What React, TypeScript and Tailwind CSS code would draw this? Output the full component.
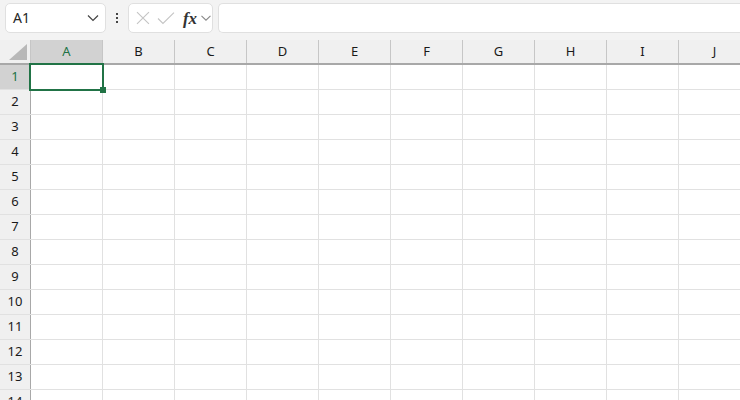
import React from "react";

const cols = ["A", "B", "C", "D", "E", "F", "G", "H", "I", "J"];
const rows = Array.from({ length: 14 }, (_, i) => i + 1);

function Chevron({ className }: { className?: string }) {
  return (
    <svg width="12" height="8" viewBox="0 0 12 8" className={className} fill="none">
      <path d="M1 1.5 L6 6.5 L11 1.5" stroke="currentColor" strokeWidth="1.2" />
    </svg>
  );
}

export default function App() {
  return (
    <div
      className="w-[740px] h-[400px] overflow-hidden bg-white"
      style={{ fontFamily: '"Segoe UI", "Noto Sans", Roboto, sans-serif' }}
    >
      {/* Formula bar */}
      <div className="h-[40px] bg-[#f3f3f3] flex items-start pt-[3px] pl-[5px]">
        <div className="w-[101px] h-[30px] bg-white border border-[#e0e0e0] rounded-[5px] flex items-center pl-[7px] pr-[6px] shrink-0">
          <span className="text-[14px] text-[#262626] flex-1 leading-none">A1</span>
          <Chevron className="text-[#444]" />
        </div>
        <div className="w-[22px] h-[30px] flex flex-col items-center justify-center gap-[2px] shrink-0">
          <div className="w-[2px] h-[2px] bg-[#444]" />
          <div className="w-[2px] h-[2px] bg-[#444]" />
          <div className="w-[2px] h-[2px] bg-[#444]" />
        </div>
        <div className="w-[85px] h-[30px] bg-white border border-[#e0e0e0] rounded-[5px] flex items-center shrink-0 pl-[5px]">
          <svg width="16" height="16" viewBox="0 0 16 16" className="ml-[1px]" fill="none">
            <path d="M2 2 L14 14 M14 2 L2 14" stroke="#c4c4c4" strokeWidth="1.1" />
          </svg>
          <svg width="18" height="16" viewBox="0 0 18 16" className="ml-[6px]" fill="none">
            <path d="M1 8.5 L6 13.5 L17 2.5" stroke="#c4c4c4" strokeWidth="1.1" />
          </svg>
          <span
            className="ml-[8px] text-[17px] italic font-bold text-[#333] leading-none"
            style={{ fontFamily: '"Liberation Serif", "DejaVu Serif", serif' }}
          >
            fx
          </span>
          <Chevron className="ml-[3px] text-[#888] scale-90" />
        </div>
        <div className="ml-[5px] flex-1 h-[30px] bg-white border border-[#e0e0e0] rounded-l-[5px] border-r-0" />
      </div>

      {/* Grid */}
      <div className="relative">
        {/* header row */}
        <div className="flex h-[25px] bg-[#f0f0f0] border-b-2 border-[#a8a8a8]">
          <div className="w-[31px] shrink-0 border-r border-[#c6c6c6] relative">
            <svg width="18" height="16" viewBox="0 0 18 16" className="absolute right-[3px] bottom-[3px]">
              <polygon points="18,0 18,16 0,16" fill="#b8b8b8" />
            </svg>
          </div>
          {cols.map((c, i) => (
            <div
              key={c}
              className={
                i === 0
                  ? "w-[72px] shrink-0 border-r border-[#c6c6c6] bg-[#d2d2d2] flex items-center justify-center text-[13px] text-[#217346]"
                  : "w-[72px] shrink-0 border-r border-[#c6c6c6] flex items-center justify-center text-[13px] text-[#1a1a1a]"
              }
            >
              {c}
            </div>
          ))}
        </div>
        {rows.map((r) => (
          <div key={r} className="flex h-[25px] border-b border-[#e1e1e1]">
            <div
              className={
                r === 1
                  ? "w-[31px] shrink-0 border-r border-[#a8a8a8] bg-[#d2d2d2] flex items-center justify-center text-[13px] text-[#217346]"
                  : "w-[31px] shrink-0 border-r border-[#a8a8a8] bg-[#f0f0f0] flex items-center justify-center text-[13px] text-[#1a1a1a]"
              }
            >
              {r}
            </div>
            {cols.map((c) => (
              <div key={c} className="w-[72px] shrink-0 border-r border-[#e1e1e1]" />
            ))}
          </div>
        ))}

        {/* selection */}
        <div className="absolute left-[29px] top-[23px] w-[75px] h-[28px] border-2 border-[#217346] pointer-events-none">
          <div className="absolute right-[-4px] bottom-[-4px] w-[6px] h-[6px] bg-[#217346]" />
        </div>
      </div>
    </div>
  );
}
